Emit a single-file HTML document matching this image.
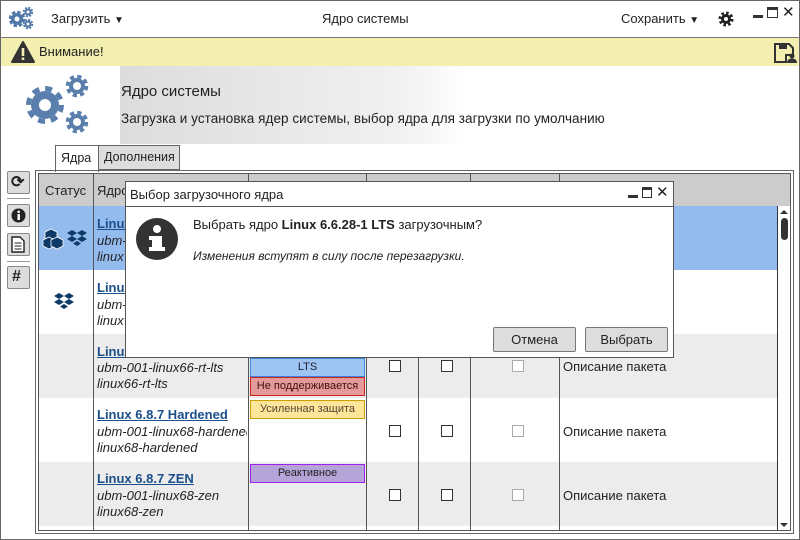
<!DOCTYPE html>
<html><head><meta charset="utf-8"><style>
*{box-sizing:border-box;margin:0;padding:0}
body{width:800px;height:540px;position:relative;overflow:hidden;background:#fff;font-family:"Liberation Sans",sans-serif;font-size:13px;color:#222}
.a{position:absolute}
.frame{left:0;top:0;width:800px;height:540px;border:1px solid #666}
.cb{position:absolute;width:12px;height:12px;border:1px solid #333;background:#fff}
.cbg{border-color:#aaa}
.lnk{color:#1b4f8c;font-weight:bold;text-decoration:underline;font-size:13px}
.it{font-style:italic;font-size:13px}
.tag{position:absolute;left:250px;width:115px;height:19px;font-size:11px;text-align:center;line-height:17px}
.btn{position:absolute;width:23px;height:23px;border:1px solid #888;background:#ddd;border-radius:2px}
.vl{position:absolute;width:1px;background:#555}
.desc{position:absolute;left:563px;font-size:13px}
</style></head><body>
<div class="a frame"></div>
<!-- top bar -->
<svg class="a" style="left:8px;top:6px" width="26" height="24" viewBox="0 0 26 24">
<g fill="#4f78a8">
<circle cx="9" cy="13" r="6"/><circle cx="9" cy="13" r="7" fill="none" stroke="#4f78a8" stroke-width="2.5" stroke-dasharray="3.5 2"/>
<circle cx="20" cy="6" r="3.5"/><circle cx="20" cy="6" r="4.3" fill="none" stroke="#4f78a8" stroke-width="1.8" stroke-dasharray="2 1.4"/>
<circle cx="20" cy="18" r="3.5"/><circle cx="20" cy="18" r="4.3" fill="none" stroke="#4f78a8" stroke-width="1.8" stroke-dasharray="2 1.4"/>
</g><circle cx="9" cy="13" r="2.5" fill="#fff"/><circle cx="20" cy="6" r="1.5" fill="#fff"/><circle cx="20" cy="18" r="1.5" fill="#fff"/></svg>
<div class="a" style="left:51px;top:11px">Загрузить <span style="font-size:10px">▼</span></div>
<div class="a" style="left:322px;top:11px">Ядро системы</div>
<div class="a" style="left:621px;top:11px">Сохранить <span style="font-size:10px">▼</span></div>
<svg class="a" style="left:718px;top:11px" width="16" height="16" viewBox="0 0 16 16"><circle cx="8" cy="8" r="5" fill="#222"/><circle cx="8" cy="8" r="6" fill="none" stroke="#222" stroke-width="3" stroke-dasharray="2.5 2.2"/><circle cx="8" cy="8" r="2" fill="#fff"/></svg>
<div class="a" style="left:753px;top:15px;width:10px;height:3px;background:#333"></div>
<div class="a" style="left:767px;top:7px;width:11px;height:11px;border:1.5px solid #333;border-top-width:3px"></div>
<div class="a" style="left:782px;top:3px;font-size:15px">✕</div>
<div class="a" style="left:0;top:37px;width:800px;height:1px;background:#777"></div>
<!-- warning -->
<div class="a" style="left:1px;top:38px;width:798px;height:28px;background:#f3efb0"></div>
<svg class="a" style="left:11px;top:41px" width="24" height="22" viewBox="0 0 24 22"><path d="M12 1 L23 21 H1Z" fill="#333" stroke="#333" stroke-linejoin="round" stroke-width="2"/><rect x="10.7" y="7" width="2.6" height="8" fill="#f3efb0"/><rect x="10.7" y="16.5" width="2.6" height="2.5" fill="#f3efb0"/></svg>
<div class="a" style="left:39px;top:44px">Внимание!</div>
<svg class="a" style="left:773px;top:42px" width="24" height="22" viewBox="0 0 24 22"><path d="M2 2H16L20 6V13H13V20H2Z" fill="none" stroke="#333" stroke-width="2"/><rect x="6" y="2" width="8" height="5" fill="#333"/><circle cx="19" cy="14" r="2.5" fill="#333"/><path d="M14 21 Q14 16.5 19 16.5 Q24 16.5 24 21Z" fill="#333"/></svg>
<!-- header -->
<div class="a" style="left:120px;top:66px;width:346px;height:78px;background:linear-gradient(90deg,#dcdcdc 0%,#e8e8e8 45%,#f0f0f0 80%,#fff 100%)"></div>
<svg class="a" style="left:25px;top:72px" width="70" height="66" viewBox="0 0 70 66">
<g fill="#5a7fad">
<circle cx="20" cy="33" r="14"/><circle cx="20" cy="33" r="16.5" fill="none" stroke="#5a7fad" stroke-width="5" stroke-dasharray="7 5.96"/>
<circle cx="52" cy="14" r="8"/><circle cx="52" cy="14" r="9.5" fill="none" stroke="#5a7fad" stroke-width="3.5" stroke-dasharray="4.2 3.26"/>
<circle cx="52" cy="50" r="8"/><circle cx="52" cy="50" r="9.5" fill="none" stroke="#5a7fad" stroke-width="3.5" stroke-dasharray="4.2 3.26"/>
</g><circle cx="20" cy="33" r="6" fill="#fff"/><circle cx="52" cy="14" r="4" fill="#fff"/><circle cx="52" cy="50" r="4" fill="#fff"/></svg>
<div class="a" style="left:121px;top:83px;font-size:15px">Ядро системы</div>
<div class="a" style="left:121px;top:111px;font-size:13.5px;letter-spacing:0.05px">Загрузка и установка ядер системы, выбор ядра для загрузки по умолчанию</div>
<!-- tabs -->
<div class="a" style="left:55px;top:145px;width:44px;height:27px;border:1px solid #666;border-bottom:none;background:#fff;padding:5px 0 0 5px;font-size:12.5px">Ядра</div>
<div class="a" style="left:98px;top:145px;width:82px;height:25px;border:1px solid #666;background:#ddd;padding:4px 0 0 5px;font-size:12.5px;white-space:nowrap;overflow:hidden">Дополнения</div>
<!-- left toolbar -->
<div class="btn" style="left:7px;top:171px"></div>
<div class="a" style="left:11px;top:172px;font-size:16px;font-weight:bold">⟳</div>
<div class="a" style="left:7px;top:198px;width:23px;height:1px;background:#999"></div>
<div class="btn" style="left:7px;top:204px"></div>
<svg class="a" style="left:11px;top:208px" width="15" height="15"><circle cx="7.5" cy="7.5" r="7" fill="#222"/><rect x="6.5" y="6" width="2.4" height="6" fill="#fff"/><circle cx="7.7" cy="3.8" r="1.3" fill="#fff"/></svg>
<div class="btn" style="left:7px;top:233px"></div>
<svg class="a" style="left:11px;top:236px" width="15" height="17"><path d="M1 1H9L13 5V16H1Z" fill="#fff" stroke="#222" stroke-width="1.4"/><path d="M3.5 7H10.5M3.5 10H10.5M3.5 13H10.5" stroke="#222"/></svg>
<div class="a" style="left:7px;top:261px;width:23px;height:1px;background:#999"></div>
<div class="btn" style="left:7px;top:266px"></div>
<div class="a" style="left:12px;top:268px;font-size:16px;font-weight:bold">#</div>
<!-- table frame -->
<div class="a" style="left:35px;top:170px;width:759px;height:364px;border:1px solid #666"></div>
<div class="a" style="left:38px;top:173px;width:753px;height:358px;border:1px solid #555;background:#fff"></div>
<div class="a" style="left:39px;top:174px;width:751px;height:32px;background:#ccc"></div>
<div class="a" style="left:45px;top:183px">Статус</div>
<div class="a" style="left:97px;top:183px">Ядро</div>
<div class="a" style="left:39px;top:206px;width:738px;height:64px;background:#93bbee"></div>
<div class="a" style="left:39px;top:334px;width:738px;height:64px;background:#ececec"></div>
<div class="a" style="left:39px;top:462px;width:738px;height:64px;background:#ececec"></div>
<div class="vl" style="left:93px;top:174px;height:356px"></div>
<div class="vl" style="left:248px;top:174px;height:356px"></div>
<div class="vl" style="left:366px;top:174px;height:356px"></div>
<div class="vl" style="left:418px;top:206px;height:324px"></div>
<div class="vl" style="left:470px;top:174px;height:356px"></div>
<div class="vl" style="left:559px;top:174px;height:356px"></div>
<!-- scrollbar -->
<div class="a" style="left:777px;top:206px;width:13px;height:324px;border-left:1px solid #333;background:#fff"></div>
<svg class="a" style="left:779px;top:209px" width="10" height="6"><path d="M1 5L5 1L9 5Z" fill="#333"/></svg>
<div class="a" style="left:781px;top:218px;width:7px;height:22px;background:#333;border-radius:4px"></div>
<svg class="a" style="left:779px;top:522px" width="10" height="6"><path d="M1 1L5 5L9 1Z" fill="#333"/></svg>
<!-- status icons -->
<svg class="a" style="left:42px;top:228px" width="50" height="22" viewBox="0 0 50 22">
<g fill="#0d3a66" stroke="#fff" stroke-width="0.8">
<path d="M9 1L15 4V10L9 13L3 10V4Z"/><path d="M5 10L11 13V19L5 22L-1 19V13Z" transform="translate(2,-1)"/><path d="M13 10L19 13V19L13 22L7 19V13Z" transform="translate(2,-1)"/>
</g>
<g fill="#0d3a66"><path d="M30 2L35 5L30 8L25 5Z"/><path d="M40 2L45 5L40 8L35 5Z"/><path d="M30 8L35 11L30 14L25 11Z"/><path d="M40 8L45 11L40 14L35 11Z"/><path d="M35 13L39 15.5L35 18L31 15.5Z"/></g></svg>
<svg class="a" style="left:53px;top:291px" width="24" height="22" viewBox="24 0 24 22"><g fill="#0d3a66"><path d="M30 2L35 5L30 8L25 5Z"/><path d="M40 2L45 5L40 8L35 5Z"/><path d="M30 8L35 11L30 14L25 11Z"/><path d="M40 8L45 11L40 14L35 11Z"/><path d="M35 13L39 15.5L35 18L31 15.5Z"/></g></svg>
<!-- rows text -->
<div class="a lnk" style="left:97px;top:216px">Linux</div>
<div class="a it" style="left:97px;top:233px">ubm-</div>
<div class="a it" style="left:97px;top:249px">linux</div>
<div class="a lnk" style="left:97px;top:280px">Linux</div>
<div class="a it" style="left:97px;top:297px">ubm-</div>
<div class="a it" style="left:97px;top:313px">linux</div>
<div class="a lnk" style="left:97px;top:344px">Linux</div>
<div class="a it" style="left:97px;top:360px">ubm-001-linux66-rt-lts</div>
<div class="a it" style="left:97px;top:376px">linux66-rt-lts</div>
<div class="a lnk" style="left:97px;top:407px">Linux 6.8.7 Hardened</div>
<div class="a it" style="left:97px;top:424px;width:150px;overflow:hidden;white-space:nowrap">ubm-001-linux68-hardened</div>
<div class="a it" style="left:97px;top:440px">linux68-hardened</div>
<div class="a lnk" style="left:97px;top:471px">Linux 6.8.7 ZEN</div>
<div class="a it" style="left:97px;top:488px">ubm-001-linux68-zen</div>
<div class="a it" style="left:97px;top:504px">linux68-zen</div>
<div class="tag" style="top:358px;background:#9ec4f2;border:1px solid #3a86d8;color:#223">LTS</div>
<div class="tag" style="top:377px;background:#e59a9a;border:1px solid #cc2222;color:#411">Не поддерживается</div>
<div class="tag" style="top:400px;background:#fde59a;border:1px solid #c9a000;color:#543">Усиленная защита</div>
<div class="tag" style="top:464px;background:#b4a4d8;border:1px solid #a020f0;color:#222">Реактивное</div>
<!-- checkboxes -->
<div class="cb" style="left:389px;top:360px"></div><div class="cb" style="left:441px;top:360px"></div><div class="cb cbg" style="left:512px;top:360px"></div>
<div class="cb" style="left:389px;top:425px"></div><div class="cb" style="left:441px;top:425px"></div><div class="cb cbg" style="left:512px;top:425px"></div>
<div class="cb" style="left:389px;top:489px"></div><div class="cb" style="left:441px;top:489px"></div><div class="cb cbg" style="left:512px;top:489px"></div>
<div class="desc" style="top:359px">Описание пакета</div>
<div class="desc" style="top:424px">Описание пакета</div>
<div class="desc" style="top:488px">Описание пакета</div>
<!-- dialog -->
<div class="a" style="left:125px;top:181px;width:549px;height:177px;border:1px solid #555;background:#fff"></div>
<div class="a" style="left:126px;top:206px;width:547px;height:1px;background:#555"></div>
<div class="a" style="left:130px;top:187px">Выбор загрузочного ядра</div>
<div class="a" style="left:628px;top:195px;width:10px;height:3px;background:#333"></div>
<div class="a" style="left:642px;top:187px;width:10px;height:11px;border:1.5px solid #333;border-top-width:3px"></div>
<div class="a" style="left:656px;top:183px;font-size:15px">✕</div>
<svg class="a" style="left:136px;top:218px" width="42" height="42"><circle cx="21" cy="21" r="21" fill="#333"/><rect x="16" y="18" width="10" height="15" fill="#fff"/><rect x="13" y="18" width="6" height="4" fill="#fff"/><rect x="13" y="29" width="16" height="4" fill="#fff"/><circle cx="21" cy="11" r="4" fill="#fff"/></svg>
<div class="a" style="left:193px;top:217px">Выбрать ядро <b>Linux 6.6.28-1 LTS</b> загрузочным?</div>
<div class="a" style="left:193px;top:249px;font-size:12px;font-style:italic">Изменения вступят в силу после перезагрузки.</div>
<div class="a" style="left:493px;top:327px;width:83px;height:25px;border:1px solid #777;background:#ddd;border-radius:2px;text-align:center;line-height:23px">Отмена</div>
<div class="a" style="left:585px;top:327px;width:83px;height:25px;border:1px solid #777;background:#ddd;border-radius:2px;text-align:center;line-height:23px">Выбрать</div>
</body></html>
